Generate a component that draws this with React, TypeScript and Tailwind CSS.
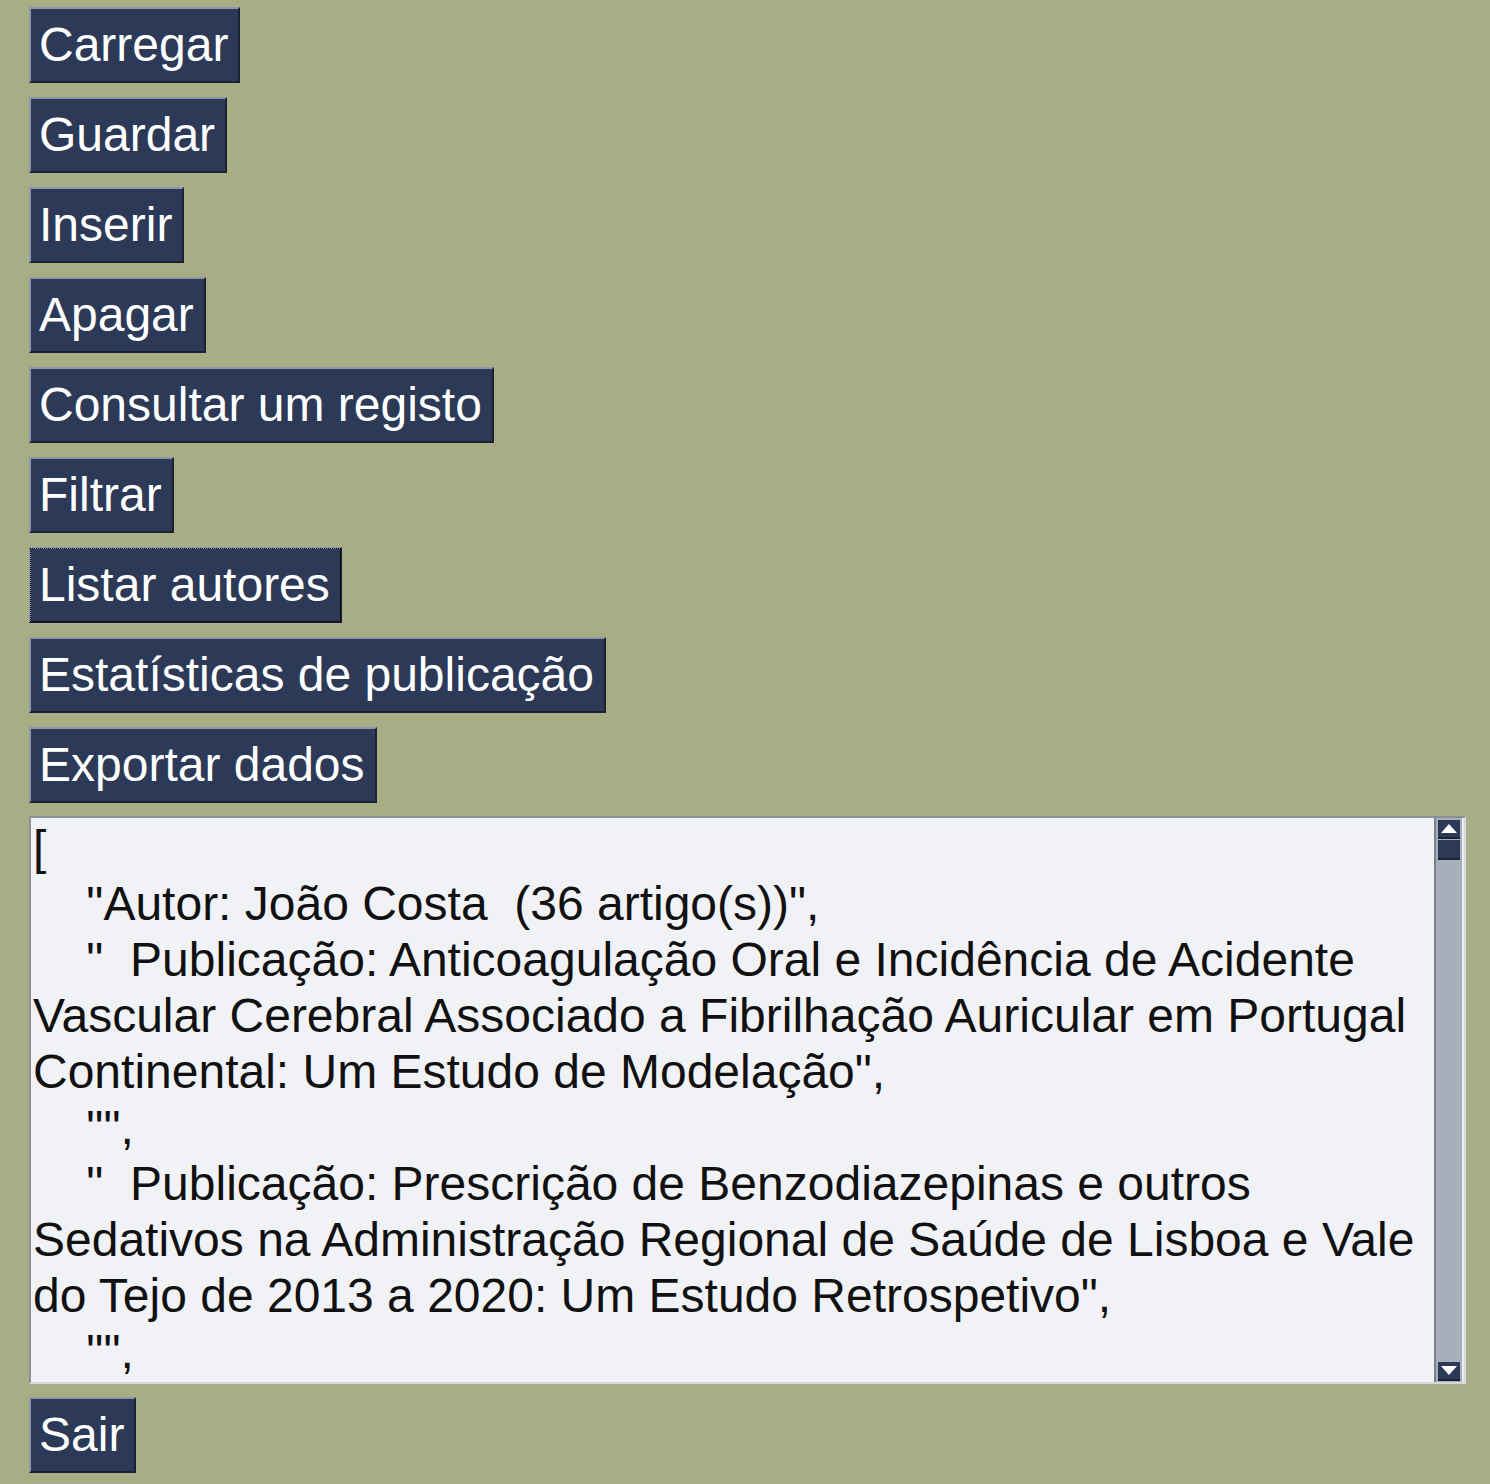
const buttons = [
  "Carregar",
  "Guardar",
  "Inserir",
  "Apagar",
  "Consultar um registo",
  "Filtrar",
  "Listar autores",
  "Estatísticas de publicação",
  "Exportar dados",
];

const output = `[
    "Autor: João Costa  (36 artigo(s))",
    "  Publicação: Anticoagulação Oral e Incidência de Acidente Vascular Cerebral Associado a Fibrilhação Auricular em Portugal Continental: Um Estudo de Modelação",
    "",
    "  Publicação: Prescrição de Benzodiazepinas e outros Sedativos na Administração Regional de Saúde de Lisboa e Vale do Tejo de 2013 a 2020: Um Estudo Retrospetivo",
    "",`;

const Btn = ({ label, focused }: { label: string; focused?: boolean }) => (
  <button
    className={
      "self-start h-[76px] flex items-center pl-[8px] pr-[10px] bg-[#2c3a58] text-white text-[48px] leading-[56px] border-t-2 border-l-2 border-t-[#8d96aa] border-l-[#8d96aa] border-b-2 border-r-2 border-b-[#1b2234] border-r-[#1b2234] " +
      (focused ? "outline-1 outline-dotted outline-black -outline-offset-2" : "")
    }
    style={{ fontFamily: '"Liberation Sans", Arial, sans-serif' }}
  >
    {label}
  </button>
);

const ScrollArrow = ({ up }: { up?: boolean }) => (
  <div className="h-[19px] mx-[2px] bg-[#2c3a58] border-b-2 border-[#1b2234] flex items-center justify-center">
    <svg width="16" height="9" viewBox="0 0 16 9">
      {up ? <polygon points="8,0 16,9 0,9" fill="#fff" /> : <polygon points="0,0 16,0 8,9" fill="#fff" />}
    </svg>
  </div>
);

export default function App() {
  return (
    <div
      className="min-h-[1484px] w-[1490px] bg-[#a8ad85] pl-[29px] pr-[24px] pt-[7px] flex flex-col gap-[13px]"
      style={{ fontFamily: '"Liberation Sans", Arial, sans-serif' }}
    >
      <div className="flex flex-col gap-[14px]">
        {buttons.map((b) => (
          <Btn key={b} label={b} focused={b === "Listar autores"} />
        ))}
      </div>

      <div className="h-[568px] flex border-t-2 border-l-2 border-[#8b9098] border-b-2 border-r-2 border-b-[#d5d9de] border-r-[#d5d9de] bg-[#f0f2f6]">
        <div className="flex-1 overflow-hidden pl-[2px] pt-[2px] text-[48px] leading-[56px] text-[#111] whitespace-pre-wrap">
          {output}
        </div>
        <div className="w-[30px] bg-[#a6afba] border-l-2 border-[#7b828b] border-r-2 border-r-[#e8edf2] flex flex-col pt-[2px] pb-[1px]">
          <ScrollArrow up />
          <div className="h-[20px] mx-[2px] mt-[1px] bg-[#2c3a58] border-b-2 border-[#1b2234]" />
          <div className="flex-1" />
          <ScrollArrow />
        </div>
      </div>

      <Btn label="Sair" />
    </div>
  );
}
